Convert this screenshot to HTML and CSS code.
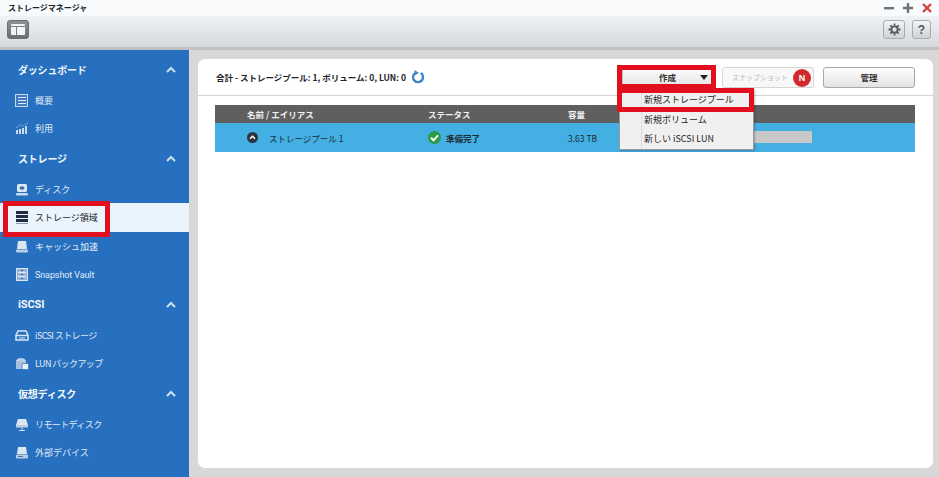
FILE: index.html
```html
<!DOCTYPE html>
<html lang="ja">
<head>
<meta charset="utf-8">
<title>ストレージマネージャ</title>
<link rel="stylesheet" href="styles.css">
</head>
<body>
<div class="app">
  <header class="titlebar">
    <span class="title">ストレージマネージャ</span>
    <div class="winctl">
      <svg width="12" height="12" viewBox="0 0 12 12"><rect x="1" y="5" width="10" height="2.4" fill="#6f7275"/></svg>
      <svg width="12" height="12" viewBox="0 0 12 12"><path d="M1 6h10M6 1v10" stroke="#6f7275" stroke-width="2.4"/></svg>
      <svg width="12" height="12" viewBox="0 0 12 12"><path d="M2 2l8 8M10 2l-8 8" stroke="#d9403f" stroke-width="2.4"/></svg>
    </div>
  </header>
  <div class="toolbar">
    <button class="tool dark" aria-label="panel">
      <svg width="14" height="11" viewBox="0 0 14 11"><rect width="14" height="11" rx="1" fill="#f2f3f4"/><rect y="2" x="5" width="1" height="9" fill="#7b7e82"/><rect y="2" width="14" height="1" fill="#7b7e82"/></svg>
    </button>
    <div class="tool-right">
      <button class="tool" aria-label="settings">
        <svg width="13" height="13" viewBox="0 0 14 14"><circle cx="7" cy="7" r="3.4" fill="none" stroke="#55585c" stroke-width="2"/><path d="M7 .6v2.400M7 11v2.400M.6 7H3M11 7h2.400M2.500 2.500l1.700 1.700M9.800 9.800l1.700 1.700M2.500 11.500l1.700-1.700M9.800 4.200l1.700-1.700" stroke="#55585c" stroke-width="1.900"/></svg>
      </button>
      <button class="tool help">?</button>
    </div>
  </div>
  <div class="body">
    <nav class="sidebar">
      <div class="head top"><span>ダッシュボード</span><svg class="chev" width="10" height="7" viewBox="0 0 10 7"><path d="M1 6l4-4 4 4" fill="none" stroke="#cfe0f2" stroke-width="2"/></svg></div>
      <a class="item first">
        <svg class="ico" width="14" height="13" viewBox="0 0 14 13"><rect x=".5" y=".5" width="12" height="12" fill="#3f7cc4" stroke="#c8d9ec"/><path d="M3 3.500h8M3 6.500h8M3 9.500h8" stroke="#dfe9f4" stroke-width="1.200"/></svg>
        <span>概要</span></a>
      <a class="item">
        <svg class="ico" width="14" height="13" viewBox="0 0 14 13"><path d="M2 8v4M5 7v5M8 6v6M11 4v8" stroke="#c8d9ec" stroke-width="2"/><path d="M1 6l4-3 3 1 5-3" fill="none" stroke="#9dbce0" stroke-dasharray="1.500 1"/></svg>
        <span>利用</span></a>
      <div class="head"><span>ストレージ</span><svg class="chev" width="10" height="7" viewBox="0 0 10 7"><path d="M1 6l4-4 4 4" fill="none" stroke="#cfe0f2" stroke-width="2"/></svg></div>
      <a class="item first">
        <svg class="ico" width="14" height="13" viewBox="0 0 14 13"><rect x="2" y="1" width="10" height="8" rx="1.500" fill="#dbe6f2"/><ellipse cx="7" cy="5" rx="2.500" ry="1.800" fill="#3f6fa6"/><rect x="1" y="10" width="12" height="2.500" rx="1" fill="#c8d9ec"/></svg>
        <span>ディスク</span></a>
      <a class="item active">
        <svg class="ico" width="14" height="13" viewBox="0 0 14 13"><rect x="1" width="12" height="3" fill="#1f2d44"/><rect x="1" y="4" width="12" height="3" fill="#1f2d44"/><rect x="1" y="8" width="12" height="3" fill="#1f2d44"/><rect x="1" y="12" width="12" height="1" fill="#8896a8"/></svg>
        <span>ストレージ領域</span></a>
      <a class="item">
        <svg class="ico" width="14" height="13" viewBox="0 0 14 13"><path d="M3 1h8l1 8H2z" fill="#dbe6f2"/><rect x="1" y="9.500" width="12" height="3" rx="1" fill="#b9cde4"/></svg>
        <span>キャッシュ加速</span></a>
      <a class="item">
        <svg class="ico" width="14" height="13" viewBox="0 0 14 13"><rect x="1.500" y=".5" width="11" height="12" fill="#8fb2d9" stroke="#dbe6f2"/><path d="M3 4.500h8M3 8.500h8" stroke="#dbe6f2" stroke-width="1.500"/><path d="M6 2.500h2M6 6.500h2M6 10.500h2" stroke="#2a5c96"/></svg>
        <span class="lat">Snapshot Vault</span></a>
      <div class="head"><span class="lat">iSCSI</span><svg class="chev" width="10" height="7" viewBox="0 0 10 7"><path d="M1 6l4-4 4 4" fill="none" stroke="#cfe0f2" stroke-width="2"/></svg></div>
      <a class="item first">
        <svg class="ico" width="14" height="13" viewBox="0 0 14 13"><path d="M3 2h8l2 4v5H1V6z" fill="none" stroke="#dbe6f2" stroke-width="1.500"/><path d="M1 6.500h12" stroke="#dbe6f2" stroke-width="1.500"/><path d="M4 9h6" stroke="#dbe6f2"/></svg>
        <span class="tight">iSCSI ストレージ</span></a>
      <a class="item">
        <svg class="ico" width="14" height="13" viewBox="0 0 14 13"><ellipse cx="6" cy="4" rx="5" ry="3" fill="#c0d2e6"/><rect x="1" y="4" width="10" height="8" fill="#a9c1dc"/><rect x="7" y="6.500" width="6.500" height="6" rx="1" fill="#e9f0f8" stroke="#2670bf" stroke-width=".7"/></svg>
        <span class="tight">LUN バックアップ</span></a>
      <div class="head"><span>仮想ディスク</span><svg class="chev" width="10" height="7" viewBox="0 0 10 7"><path d="M1 6l4-4 4 4" fill="none" stroke="#cfe0f2" stroke-width="2"/></svg></div>
      <a class="item first">
        <svg class="ico" width="14" height="13" viewBox="0 0 14 13"><path d="M3 1h8l2 6H1z" fill="#dbe6f2"/><rect x="1" y="7" width="12" height="2.500" fill="#b9cde4"/><path d="M7 9.500v2M4 12.500h6" stroke="#dbe6f2" stroke-width="1.200"/></svg>
        <span class="tight">リモートディスク</span></a>
      <a class="item">
        <svg class="ico" width="14" height="13" viewBox="0 0 14 13"><path d="M3 1h8l1 7H2z" fill="#dbe6f2"/><rect x="1" y="8.500" width="12" height="4" rx="1" fill="#b9cde4"/><path d="M3 10.500h5" stroke="#3f6fa6"/></svg>
        <span>外部デバイス</span></a>
    </nav>
    <main class="content">
      <section class="card">
        <div class="card-top">
          <div class="summary">
            <span>合計 - ストレージプール: 1, ボリューム: 0, LUN: 0</span>
            <svg width="14" height="14" viewBox="0 0 14 14"><path d="M4 3.200A5 5 0 1 0 9.800 3" fill="none" stroke="#3b86c8" stroke-width="2.400"/><path d="M3.500 0v5.500L8 3z" fill="#3b86c8"/></svg>
          </div>
          <div class="actions">
            <button class="btn create"><span>作成</span><i class="caret"></i></button>
            <button class="btn snap"><span>スナップショット</span><b class="badge">N</b></button>
            <button class="btn manage">管理</button>
          </div>
        </div>
        <div class="table">
          <div class="thead">
            <span class="c-name">名前 / エイリアス</span>
            <span class="c-status">ステータス</span>
            <span class="c-cap">容量</span>
          </div>
          <div class="trow">
            <span class="c-name">
              <svg class="expand" width="11" height="11" viewBox="0 0 11 11"><circle cx="5.500" cy="5.500" r="5.500" fill="#2b3440"/><path d="M3 6.800l2.500-2.500L8 6.800" fill="none" stroke="#fff" stroke-width="1.500"/></svg>
              ストレージプール 1</span>
            <span class="c-status">
              <svg class="ok" width="13" height="13" viewBox="0 0 13 13"><circle cx="6.500" cy="6.500" r="6.500" fill="#2d9a46"/><path d="M3 6.800l2.500 2.500L10 4.300" fill="none" stroke="#fff" stroke-width="2"/></svg>
              <span>準備完了</span></span>
            <span class="c-cap">3.63 TB</span>
            <span class="bar"></span>
          </div>
        </div>
      </section>
    </main>
  </div>
  <div class="menu">
    <div class="mi">新規ストレージプール</div>
    <div class="mi">新規ボリューム</div>
    <div class="mi">新しい iSCSI LUN</div>
  </div>
  <div class="mark m-side"></div>
  <div class="mark m-create"></div>
  <div class="mark m-pool"></div>
</div>
</body>
</html>
```
FILE: styles.css
```css
* { box-sizing: border-box; }
html, body { margin: 0; height: 100%; }
body { font-family: "Noto Sans CJK JP", "Liberation Sans", sans-serif; color: #222; overflow: hidden; }
.app { position: relative; width: 939px; height: 477px; overflow: hidden; background: #d8d8d8; display: flex; flex-direction: column; }

.titlebar { height: 16px; background: #f8fafb; display: flex; align-items: center; justify-content: space-between; padding: 0 6px 0 8px; }
.title { font-size: 8px; font-weight: 700; color: #20242a; line-height: 16px; }
.winctl { display: flex; gap: 7px; }

.toolbar { height: 34px; flex: none; background: linear-gradient(#eef1f5, #d6d9dc); border-bottom: 3px solid #bfc1c3; display: flex; align-items: center; justify-content: space-between; padding: 0 8px 4px 7px; }
.tool { width: 22px; height: 19px; padding: 0; border: 1px solid #a8abaf; border-radius: 3px; background: linear-gradient(#f3f4f5, #cfd1d4); display: flex; align-items: center; justify-content: center; font: 700 12px "Liberation Sans", sans-serif; color: #55585c; }
.tool.dark { background: linear-gradient(#8d9094, #6a6d71); border-color: #6a6d71; }
.tool-right { display: flex; gap: 7px; }
.tool.help { width: 19px; }

.body { flex: 1; display: flex; min-height: 0; }
.sidebar { width: 189px; flex: none; background: #2670bf; padding-top: 4px; color: #dfeaf6; }
.head { height: 30px; display: flex; align-items: center; justify-content: space-between; padding: 0 13px 0 18px; font-size: 10px; font-weight: 700; letter-spacing: -.2px; color: #f3f7fc; }
.head.top { margin-bottom: 1px; }
.lat { font-family: Roboto, "Noto Sans CJK JP", sans-serif; letter-spacing: -.1px; }
.head .lat { font-size: 11px; }
.tight { letter-spacing: -.6px; }
.item { height: 28.500px; display: flex; align-items: center; gap: 6px; padding-left: 15px; font-size: 9px; color: #e1ebf6; }
.item.first { margin-top: 2px; }
.item.active { height: 29px; margin-top: -.5px; background: #eaf4fd; color: #1a1f26; }
.ico { flex: none; }

.content { flex: 1; min-width: 0; padding: 9px 6px 9px 9px; }
.card { height: 100%; background: #fff; border-radius: 7px; padding: 0 18px 0 17px; }
.card-top { height: 37px; margin: 0 -18px 0 -17px; padding: 0 18px 0 18px; border-bottom: 1px solid #d4d4d4; display: flex; align-items: center; justify-content: space-between; }
.summary { display: flex; align-items: center; gap: 5px; font-size: 8.500px; font-weight: 700; color: #20242a; }
.actions { display: flex; align-items: center; gap: 9px; }
.btn { width: 92px; height: 21px; padding: 0; border: 1px solid #a9a9a9; border-radius: 3px; background: linear-gradient(#fdfdfd, #e3e3e3); font: 700 8.500px "Noto Sans CJK JP", sans-serif; color: #333; display: flex; align-items: center; justify-content: center; position: relative; }
.btn.create { width: 91px; border-color: #c5c5c5; }
.caret { position: absolute; right: 4px; top: 7px; border: 4px solid transparent; border-top: 5px solid #222; border-bottom: 0; }
.btn.snap { font-size: 7px; font-weight: 400; color: #b5b5b5; border-color: #d5d5d5; background: #f8f8f8; justify-content: flex-start; padding-left: 9px; }
.badge { position: absolute; right: 2px; top: 1px; width: 18px; height: 18px; border-radius: 50%; background: #cf2a2e; color: #fff; font: 700 9px/18px "Liberation Sans", sans-serif; text-align: center; }

.table { margin-top: 9px; }
.thead { height: 18px; background: #5f5f5f; color: #f2f2f2; font-size: 8.500px; font-weight: 700; display: flex; align-items: center; position: relative; }
.trow { height: 29px; background: #43afe2; color: #1e2a33; font-size: 8.500px; display: flex; align-items: center; position: relative; }
.c-name { width: 213px; padding-left: 32px; display: flex; align-items: center; flex: none; }
.c-status { width: 140px; flex: none; display: flex; align-items: center; }
.c-cap { flex: none; }
.expand { margin-right: 11px; }
.ok { margin-right: 5px; }
.c-status span { font-weight: 700; }
.bar { position: absolute; left: 475px; top: 8px; width: 122px; height: 12px; background: #c8c8c8; }

.menu { position: absolute; left: 619px; top: 88px; width: 135px; height: 62px; background: linear-gradient(90deg, #f0f0f0 21px, #dcdcdc 21px, #dcdcdc 22px, #f0f0f0 22px); border: 1px solid #9a9a9a; box-shadow: 1px 1px 2px rgba(0,0,0,.25); padding-top: 1px; }
.mi { height: 19.500px; padding-left: 24px; font-size: 9px; line-height: 19.500px; color: #1c1c1c; white-space: nowrap; }

.mark { position: absolute; border: 5px solid #e2101f; }
.m-side { left: 3px; top: 201px; width: 107px; height: 36px; }
.m-create { left: 617px; top: 65px; width: 99px; height: 24px; }
.m-pool { left: 617px; top: 88px; width: 137px; height: 24px; }
```
